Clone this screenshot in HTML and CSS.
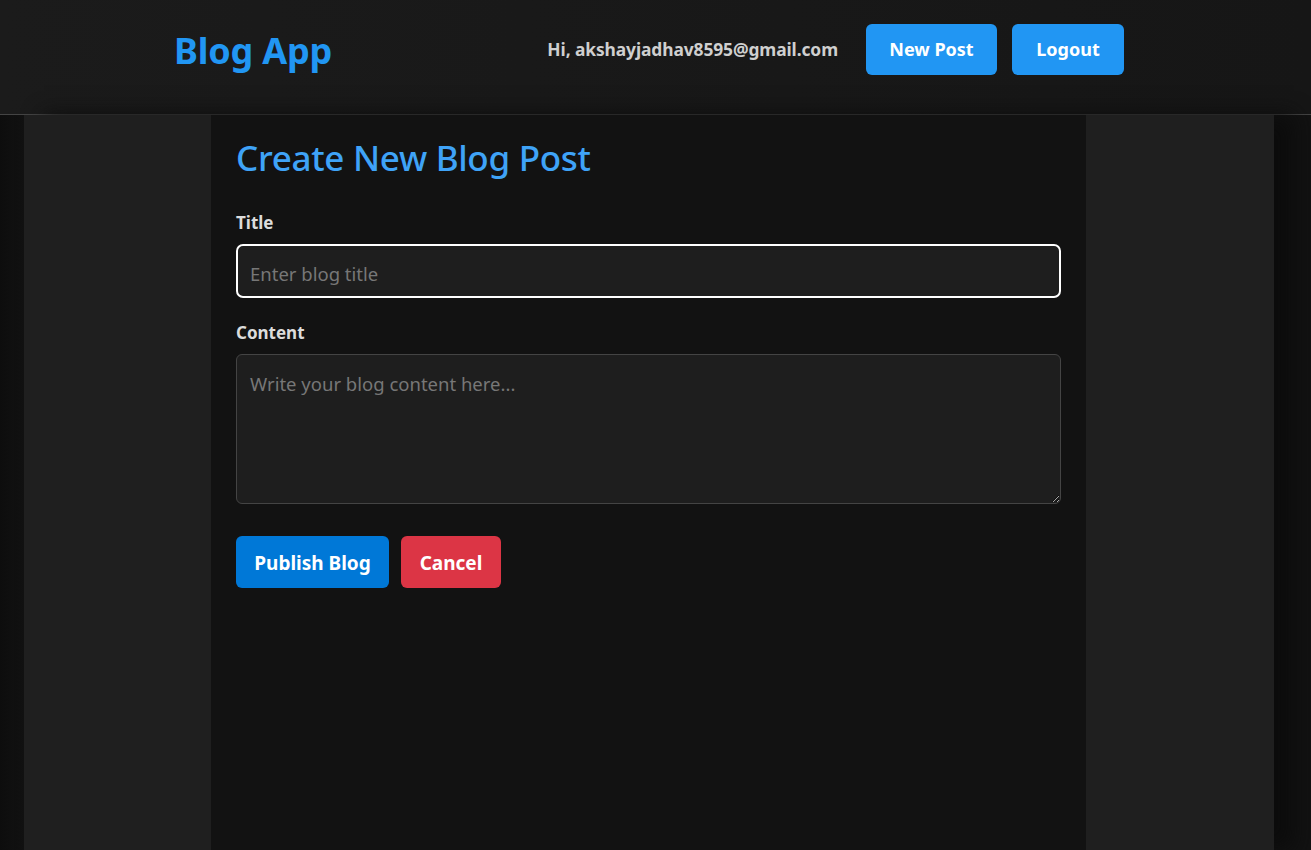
FILE: index.html
```html
<!DOCTYPE html>
<html lang="en">
<head>
<meta charset="utf-8">
<title>Blog App</title>
<link rel="stylesheet" href="styles.css">
</head>
<body>
<header class="topbar">
  <div class="topbar-inner">
    <div class="brand">Blog App</div>
    <nav class="nav">
      <span class="greeting">Hi, akshayjadhav8595@gmail.com</span>
      <button class="btn btn-nav btn-new">New Post</button>
      <button class="btn btn-nav btn-logout">Logout</button>
    </nav>
  </div>
</header>
<div class="page">
  <div class="shell">
    <main class="panel">
      <h1 class="title">Create New Blog Post</h1>
      <form class="form">
        <label class="label" for="t">Title</label>
        <input id="t" class="field field-focus" type="text" placeholder="Enter blog title">
        <label class="label" for="c">Content</label>
        <textarea id="c" class="field area" placeholder="Write your blog content here..."></textarea>
        <div class="actions">
          <button type="button" class="btn btn-publish">Publish Blog</button>
          <button type="button" class="btn btn-cancel">Cancel</button>
        </div>
      </form>
    </main>
  </div>
</div>
</body>
</html>
```
FILE: styles.css
```css
* { box-sizing: border-box; }
html, body { height: 100%; }
body {
  margin: 0;
  background: #0f0f0f;
  font-family: "Noto Sans", "Open Sans", sans-serif;
  color: #ddd;
  overflow: hidden;
}
.topbar {
  height: 115px;
  background: linear-gradient(90deg, #1b1b1b, #161616);
  border-bottom: 1px solid #444;
}
.topbar-inner {
  width: 950px;
  margin-left: 174px;
  height: 100%;
  display: flex;
  align-items: center;
  justify-content: space-between;
  padding-bottom: 16px;
}
.brand {
  color: #2196f3;
  font-size: 36px;
  font-weight: 700;
  letter-spacing: -0.2px;
  margin-top: 3px;
}
.nav {
  display: flex;
  align-items: center;
}
.greeting {
  color: #cfcfcf;
  font-weight: 700;
  font-size: 17.4px;
  margin-right: 28px;
  letter-spacing: -0.1px;
}
.btn {
  border: none;
  color: #fff;
  font-family: inherit;
  font-weight: 700;
  border-radius: 6px;
  cursor: pointer;
  padding: 0;
}
.btn-nav {
  background: #2196f3;
  height: 51px;
  font-size: 18px;
}
.btn-new { width: 131px; margin-right: 15px; }
.btn-logout { width: 112px; }
.page {
  height: calc(100% - 115px);
  padding-left: 24px;
  background: linear-gradient(90deg, #0d0d0d, #121212 24px);
}
.shell {
  width: 1250px;
  height: 100%;
  background: #1f1f1f;
  padding-left: 187px;
  box-shadow: 20px 0 20px #0c0c0c;
}
.panel {
  width: 875px;
  height: 100%;
  background: #121212;
  padding: 20px 25px;
}
.title {
  margin: 0 0 30px;
  color: #3fa3f7;
  font-size: 35px;
  font-weight: 500;
  line-height: 46px;
  letter-spacing: -0.3px;
}
.form { display: flex; flex-direction: column; }
.label {
  font-weight: 700;
  font-size: 17px;
  color: #dcdcdc;
  line-height: 24px;
  margin-bottom: 9px;
}
.field {
  width: 825px;
  background: #1e1e1e;
  border: 1px solid #444;
  border-radius: 6px;
  color: #eee;
  font-family: inherit;
  font-size: 18.5px;
  padding: 12px 13px;
}
.field::placeholder { color: #777; }
.field-focus {
  height: 54px;
  border: 2px solid #fff;
  border-radius: 7px;
  outline: none;
  margin-bottom: 23px;
  padding: 14px 12px 10px;
}
.area {
  height: 150px;
  resize: vertical;
  outline: none;
  padding-top: 16px;
}
.actions {
  display: flex;
  gap: 12px;
  margin-top: 32px;
}
.btn-publish {
  background: #0078d7;
  width: 153px;
  height: 52px;
  font-size: 19px;
  padding-top: 2px;
}
.btn-cancel {
  background: #dc3545;
  width: 100px;
  height: 52px;
  font-size: 19px;
  padding-top: 2px;
}
```
